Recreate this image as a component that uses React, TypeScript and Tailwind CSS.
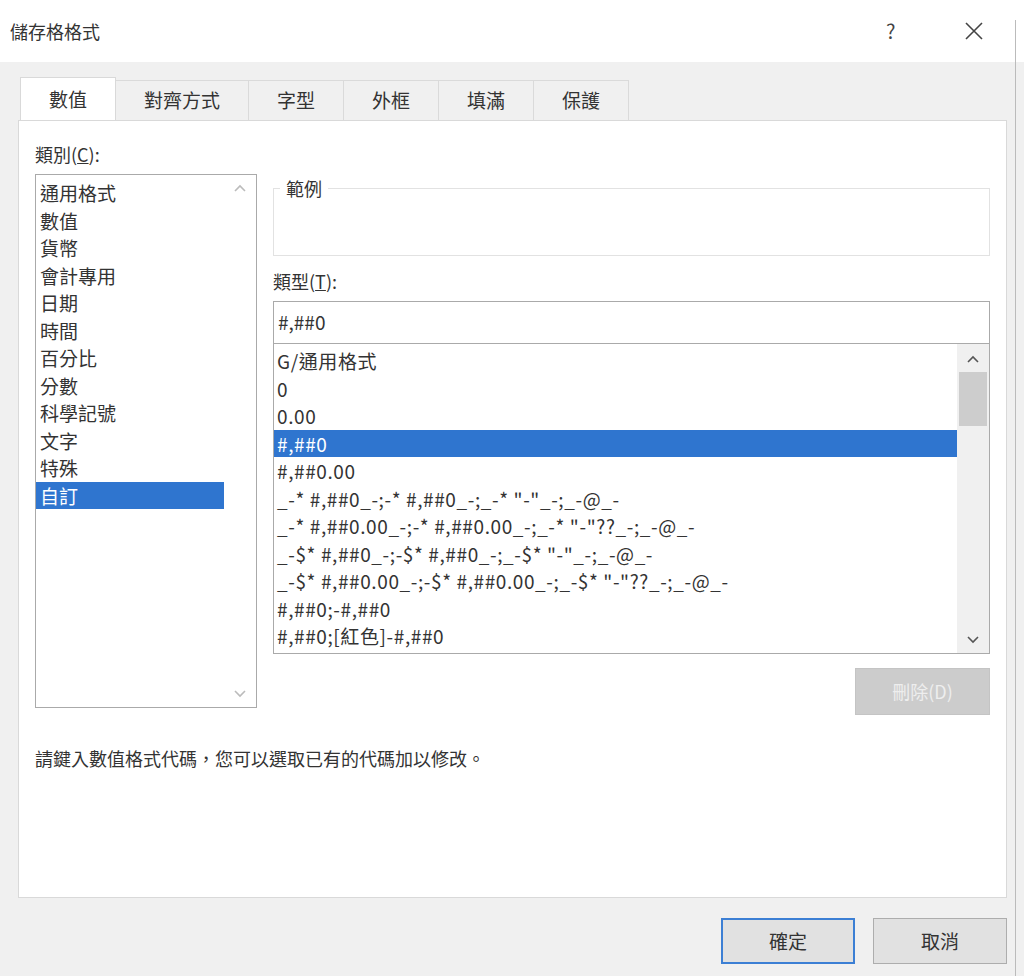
import React from 'react';

const font = { fontFamily: '"Noto Sans CJK TC", "Noto Sans", sans-serif' };

const categories = ['通用格式', '數值', '貨幣', '會計專用', '日期', '時間', '百分比', '分數', '科學記號', '文字', '特殊', '自訂'];
const formats = [
  'G/通用格式',
  '0',
  '0.00',
  '#,##0',
  '#,##0.00',
  '_-* #,##0_-;-* #,##0_-;_-* "-"_-;_-@_-',
  '_-* #,##0.00_-;-* #,##0.00_-;_-* "-"??_-;_-@_-',
  '_-$* #,##0_-;-$* #,##0_-;_-$* "-"_-;_-@_-',
  '_-$* #,##0.00_-;-$* #,##0.00_-;_-$* "-"??_-;_-@_-',
  '#,##0;-#,##0',
  '#,##0;[紅色]-#,##0',
];
const tabs = ['數值', '對齊方式', '字型', '外框', '填滿', '保護'];

const Up = () => (
  <svg width="14" height="10" viewBox="0 0 14 10"><path d="M2 8 L7 3 L12 8" fill="none" stroke="currentColor" strokeWidth="1.6" /></svg>
);
const Down = () => (
  <svg width="14" height="10" viewBox="0 0 14 10"><path d="M2 2 L7 7 L12 2" fill="none" stroke="currentColor" strokeWidth="1.6" /></svg>
);

export default function App() {
  return (
    <div className="w-[1024px] h-[976px] bg-[#f0f0f0] relative text-[#333] overflow-hidden" style={font}>
      <div className="h-[62px] bg-white flex items-center pl-[10px] pr-[40px] text-[18px]">
        <span className="flex-1">儲存格格式</span>
        <span className="w-[30px] text-[20px] text-[#444]">?</span>
        <svg className="ml-[48px]" width="20" height="20" viewBox="0 0 20 20"><path d="M2 2 L18 18 M18 2 L2 18" stroke="#444" strokeWidth="1.6" /></svg>
      </div>
      <div className="absolute right-[8px] top-[20px] bottom-0 w-px bg-[#bbb]" />
      <div className="ml-[18px] w-[989px] mt-[16px]">
        <div className="flex h-[42px] items-end text-[19px]">
          {tabs.map((t, i) => (
            <div
              key={t}
              className={
                i === 0
                  ? 'w-[96px] h-[44px] bg-white border border-b-0 border-[#d9d9d9] flex items-center justify-center ml-[2px] relative top-px'
                  : 'h-[40px] px-[28px] border border-l-0 border-b-0 border-[#dadada] bg-[#f0f0f0] flex items-center justify-center'
              }
            >
              {t}
            </div>
          ))}
        </div>
        <div className="bg-white border border-[#d9d9d9] h-[778px] relative px-[16px] pt-[20px]">
          <div className="text-[18px]">類別(<u>C</u>):</div>
          <div className="flex gap-[16px] mt-[6px]">
            <div className="w-[222px] h-[534px] border border-[#aaa] flex">
              <div className="flex-1 pt-[4px]">
                {categories.map((c) => (
                  <div key={c} className={`h-[27.5px] leading-[27.5px] text-[19px] px-[4px] ${c === '自訂' ? 'bg-[#2f75cf] text-white' : ''}`}>{c}</div>
                ))}
              </div>
              <div className="w-[32px] flex flex-col justify-between items-center py-[8px] text-[#bbb]">
                <Up />
                <Down />
              </div>
            </div>
            <div className="flex-1">
              <div className="border border-[#e2e2e2] h-[68px] mt-[14px] relative">
                <span className="absolute -top-[14px] left-[6px] bg-white px-[6px] text-[18px]">範例</span>
              </div>
              <div className="text-[18px] mt-[12px]">類型(<u>T</u>):</div>
              <div className="border border-[#aaa] h-[43px] mt-[6px] text-[19px] px-[4px] flex items-center">#,##0</div>
              <div className="border border-[#aaa] border-t-0 h-[310px] flex">
                <div className="flex-1 pt-[3px]">
                  {formats.map((f, i) => (
                    <div key={i} className={`h-[27.5px] leading-[27.5px] text-[19px] tracking-[0.6px] px-[3px] whitespace-pre ${i === 3 ? 'bg-[#2f75cf] text-white' : ''}`}>{f}</div>
                  ))}
                </div>
                <div className="w-[32px] bg-[#f0f0f0] flex flex-col items-center pt-[10px] pb-[8px] text-[#555]">
                  <Up />
                  <div className="w-[28px] h-[54px] bg-[#cdcdcd] mt-[8px]" />
                  <div className="flex-1" />
                  <Down />
                </div>
              </div>
              <div className="flex justify-end mt-[14px]">
                <div className="w-[135px] h-[47px] bg-[#cccccc] border border-[#c4c4c4] flex items-center justify-center text-[18px] text-[#eee]">刪除(D)</div>
              </div>
            </div>
          </div>
          <div className="text-[18px] mt-[30px]">請鍵入數值格式代碼，您可以選取已有的代碼加以修改。</div>
        </div>
        <div className="flex justify-end gap-[18px] mt-[20px] pr-0">
          <div className="w-[134px] h-[46px] border-2 border-[#3c7fd4] bg-[#e1e1e1] flex items-center justify-center text-[19px]">確定</div>
          <div className="w-[134px] h-[46px] border border-[#adadad] bg-[#e1e1e1] flex items-center justify-center text-[19px]">取消</div>
        </div>
      </div>
    </div>
  );
}
